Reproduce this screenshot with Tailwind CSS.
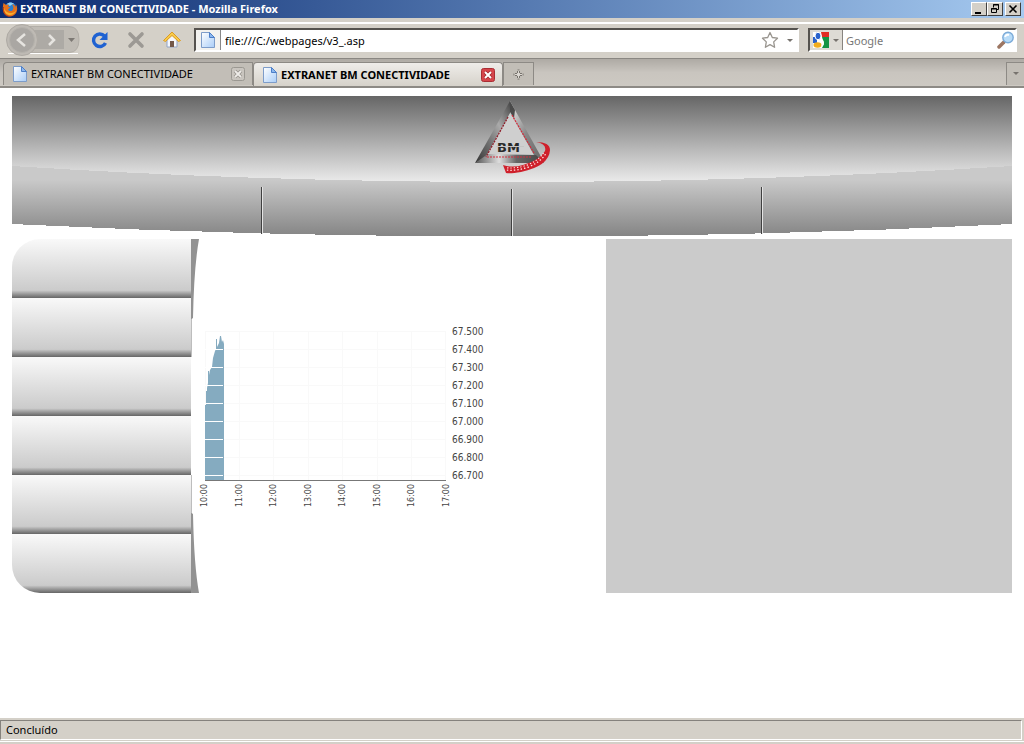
<!DOCTYPE html>
<html lang="pt-BR">
<head>
<meta charset="utf-8">
<title>EXTRANET BM CONECTIVIDADE</title>
<script src="https://cdn.jsdelivr.net/npm/@tailwindcss/browser@4"></script>
</head>
<body class="flex min-h-screen flex-col bg-white font-['Noto_Sans',sans-serif] text-[11px] leading-4 text-black">

<svg class="absolute size-0" aria-hidden="true">
  <defs>
    <linearGradient id="sheet" x1="0" y1="0" x2="1" y2="1"><stop offset="0" stop-color="#fff"/><stop offset="1" stop-color="#a9cdf8"/></linearGradient>
    <symbol id="page" viewBox="0 0 14 16"><path d="M.5.5h8l5 5v10H.5z" fill="url(#sheet)" stroke="#7d9cc9"/><path d="M8.500.5v5h5z" fill="#8db8ef" stroke="#4d7fc8"/></symbol>
  </defs>
</svg>

<!-- Title bar -->
<header class="flex h-[18px] shrink-0 items-center bg-linear-to-r from-[#0c2a70] to-[#a6caf0] pl-[2px] pr-[3px]">
  <svg class="mr-[2px] size-4 shrink-0" viewBox="0 0 16 16" aria-hidden="true">
    <circle cx="8.500" cy="7.500" r="6" fill="#2c7fd0"/><path d="M5 3c2-2 5-2 7 0-2 0-3 1-4 2z" fill="#8ed0f5"/>
    <path d="M1.500 2 4 4l3-.5-1 2 2 1-2 2c1 2 4 2 5 0 1-2 0-4-1-5 3 0 3 2 3.500 3l.5-3c3 5 0 12-6 12S-.5 10 1.500 2z" fill="#e5701b"/>
    <path d="M2 7c0 5 3 7.500 7 7 3-.5 5-3 5-5-1 2-3 3.500-6 3S3 10 2 7z" fill="#f8b02c"/><path d="M1.500 6c-1 5 2 9 6 9.500" fill="none" stroke="#b43a12"/>
  </svg>
  <h1 class="flex-1 whitespace-nowrap text-[11px] font-bold leading-4 text-white">EXTRANET BM CONECTIVIDADE - Mozilla Firefox</h1>
  <div class="flex">
    <button aria-label="Minimizar" class="h-[14px] w-4 border border-b-[#404040] border-l-white border-r-[#404040] border-t-white bg-[#d4d0c8]"><svg class="h-3 w-[14px]" viewBox="0 0 14 12"><path d="M3 9h6v2H3z"/></svg></button>
    <button aria-label="Restaurar" class="h-[14px] w-4 border border-b-[#404040] border-l-white border-r-[#404040] border-t-white bg-[#d4d0c8]"><svg class="h-3 w-[14px]" viewBox="0 0 14 12"><path d="M5.500 4.500v-3h5v5h-2M5 2h6M3.500 5.500h5v4h-5zM3 6h6" fill="none" stroke="#000"/></svg></button>
    <button aria-label="Fechar" class="ml-[2px] h-[14px] w-4 border border-b-[#404040] border-l-white border-r-[#404040] border-t-white bg-[#d4d0c8]"><svg class="h-3 w-[14px]" viewBox="0 0 14 12"><path d="m3.500 2.500 7 7m0-7-7 7" stroke="#000" stroke-width="1.600"/></svg></button>
  </div>
</header>

<!-- Navigation toolbar -->
<div class="flex h-[41px] shrink-0 items-center border-b border-t-4 border-b-[#8a8782] border-t-[#d4d0c8] bg-[#d4d0c8] pl-[2px] pr-[7px] shadow-[inset_0_2px_0_#fff]">
  <div class="relative flex h-[34px] w-[78px] items-center">
    <svg class="absolute inset-0 h-[34px] w-[78px]" viewBox="0 0 78 34" aria-hidden="true">
      <path d="M14 3.500h53q10 0 10 13t-10 13H14" fill="#c0bcb5" stroke="#b3afa8"/>
      <path d="M6 30.500h70" stroke="#fff"/>
      <path d="M30 7h32v19H30z" fill="#adaaa5"/>
      <circle cx="20" cy="17" r="15.500" fill="#bebab4" stroke="#aeaaa4"/><circle cx="20" cy="17" r="12.500" fill="#aaa7a3" stroke="#b6b3ad"/>
      <path d="m23 11-7 6 7 6" fill="none" stroke="#e6e4e0" stroke-width="2.500"/><path d="m47 12 5 5-5 5" fill="none" stroke="#e6e4e0" stroke-width="2.500"/>
      <path d="M66 15h7l-3.500 4z" fill="#7d7974"/>
    </svg>
    <button aria-label="Voltar" class="relative h-8 w-9"></button>
    <button aria-label="Avançar" class="relative h-8 w-7"></button>
    <button aria-label="Histórico" class="relative h-8 w-3"></button>
  </div>
  <button aria-label="Recarregar" class="ml-[11px] h-5 w-[18px]"><svg class="h-5 w-[18px]" viewBox="0 0 18 20"><path d="M13.500 6A6.300 6.300 0 1 0 14.500 13" fill="none" stroke="#1f62d2" stroke-width="3.400"/><path d="M16.500 2v8H8.500l2.500-2.500z" fill="#1f62d2"/></svg></button>
  <button aria-label="Parar" class="ml-[18px] h-5 w-[18px]"><svg class="h-5 w-[18px]" viewBox="0 0 18 20"><path d="m3 4 12 12M15 4 3 16" stroke="#9c9994" stroke-width="3.600" stroke-linecap="round"/></svg></button>
  <button aria-label="Página inicial" class="ml-[18px] h-5 w-[18px]"><svg class="h-5 w-[18px]" viewBox="0 0 18 20"><path d="M4 10v7h10v-7L9 5z" fill="#f5f7fc" stroke="#92a4c5"/><path d="M7 11h4v6H7z" fill="#735849"/><path d="M9 2 .5 10.500l2 1L9 5.500l6.500 6 2-1z" fill="#f8cb4b" stroke="#dc9b24"/></svg></button>
  <div class="ml-[13px] flex h-6 flex-1 items-center border-2 border-b-white border-l-[#55524e] border-r-white border-t-[#55524e] bg-white">
    <div class="flex h-full w-[25px] items-center justify-center border-r border-[#888] bg-[#f3f2ef]"><svg class="h-4 w-[14px]"><use href="#page"/></svg></div>
    <input aria-label="Endereço" value="file:///C:/webpages/v3_.asp" class="h-full min-w-0 flex-1 bg-transparent pl-1 outline-none">
    <button aria-label="Favoritar" class="size-[18px]"><svg class="size-[18px]" viewBox="0 0 18 18"><path d="m9 1.500 2.300 5 5.200.7-3.800 3.700.9 5.400L9 13.600l-4.600 2.700.9-5.400L1.500 7.200l5.200-.7z" fill="#fff" stroke="#99958f" stroke-width="1.300" stroke-linejoin="round"/></svg></button>
    <button aria-label="Mostrar endereços" class="ml-1 h-5 w-[14px]"><svg class="h-5 w-[14px]" viewBox="0 0 14 20"><path d="M4 9h6l-3 3z" fill="#77736e"/></svg></button>
  </div>
  <div class="ml-[9px] flex h-6 w-[209px] items-center border-2 border-b-white border-l-[#55524e] border-r-white border-t-[#55524e] bg-white">
    <button aria-label="Mecanismo de busca" class="flex h-full w-[33px] items-center border-r border-[#88847f] bg-[#dedbd5] pl-[3px]">
      <svg class="size-4" viewBox="0 0 16 16"><path d="M0 0h16v16H0z" fill="#fff"/><path d="M8 0h8v5H9z" fill="#e22b22"/><path d="M9 5h7v11H9l2-4z" fill="#149443"/><path d="M0 5h4v6H0z" fill="#2a62cc"/><ellipse cx="5" cy="4" rx="3" ry="3.700" fill="#2a62cc" stroke="#fff"/><ellipse cx="4.500" cy="13" rx="4" ry="2.800" fill="#f2ac1e"/><path d="M8 7c3 2 3 4 1 7" fill="none" stroke="#fff" stroke-width="1.500"/></svg>
      <svg class="ml-1 h-3 w-[6px]" viewBox="0 0 6 12"><path d="M0 5h6L3 8z" fill="#77736e"/></svg>
    </button>
    <input type="search" aria-label="Pesquisar" placeholder="Google" class="h-full min-w-0 flex-1 bg-transparent pl-[3px] outline-none placeholder:text-[#777]">
    <button aria-label="Buscar" class="size-[18px]"><svg class="size-[18px]" viewBox="0 0 18 18"><path d="m2 16 5-5" stroke="#9c7662" stroke-width="3.500" stroke-linecap="round"/><circle cx="11" cy="6.500" r="5.200" fill="#b9dcf8" stroke="#7cabd8" stroke-width="1.400"/><path d="M8 6q1-3 4-2" fill="none" stroke="#fff" stroke-width="2"/></svg></button>
  </div>
</div>

<!-- Tab strip -->
<nav aria-label="Abas" class="flex h-[29px] shrink-0 items-start border-b-2 border-b-[#8d8a85] bg-linear-to-b from-[#aeaaa4] via-[#c9c5bf] to-[#cdc9c2] pl-[3px] pt-[3px]">
  <div class="flex h-[23px] w-[250px] items-center rounded-tl-sm border border-b-0 border-[#8d8a85] bg-[#c2beb7] pl-[9px] pr-[7px]">
    <svg class="mr-1 h-4 w-[14px]"><use href="#page"/></svg>
    <a href="#" class="flex-1 whitespace-nowrap">EXTRANET BM CONECTIVIDADE</a>
    <button aria-label="Fechar aba" class="size-[14px]"><svg class="size-[14px]" viewBox="0 0 14 14"><rect x=".5" y=".5" width="13" height="13" rx="2" fill="#c9c5bf" stroke="#9b9892"/><path d="m4 4 6 6m0-6-6 6" stroke="#98948e" stroke-width="3.500"/><path d="m4 4 6 6m0-6-6 6" stroke="#eeece8" stroke-width="1.800"/></svg></button>
  </div>
  <div class="flex h-6 w-[250px] items-center rounded-t-sm border border-b-0 border-[#8d8a85] bg-linear-to-b from-[#efedea] to-[#d6d2ca] pl-[9px] pr-[7px]">
    <svg class="mr-1 h-4 w-[14px]"><use href="#page"/></svg>
    <a href="#" aria-current="page" class="flex-1 whitespace-nowrap font-bold">EXTRANET BM CONECTIVIDADE</a>
    <button aria-label="Fechar aba atual" class="size-[14px]"><svg class="size-[14px]" viewBox="0 0 14 14"><rect x=".5" y=".5" width="13" height="13" rx="2" fill="#d6454b" stroke="#a92e34"/><path d="m4 4 6 6m0-6-6 6" stroke="#9d262c" stroke-width="3.500"/><path d="m4 4 6 6m0-6-6 6" stroke="#fff" stroke-width="2"/></svg></button>
  </div>
  <button aria-label="Nova aba" class="flex h-[23px] w-[31px] items-center justify-center border border-b-0 border-[#8d8a85] bg-[#c2beb7]"><svg class="size-[11px]" viewBox="0 0 11 11"><path d="M4.500 1h2v3.500H10v2H6.500V10h-2V6.500H1v-2h3.500z" fill="#ddd9d3" stroke="#77736d" stroke-dasharray="2 1"/></svg></button>
  <button aria-label="Listar abas" class="ml-auto flex h-[23px] w-[18px] items-center justify-center border border-b-0 border-r-0 border-[#8d8a85] bg-[#c2beb7]"><svg class="h-1 w-[6px]" viewBox="0 0 6 4"><path d="M0 0h6L3 3z" fill="#77736e"/></svg></button>
</nav>

<!-- Page -->
<main class="flex-1 px-3 pt-2">
  <div class="relative h-[140px]">
    <svg class="h-full w-full" viewBox="0 0 1000 140" preserveAspectRatio="none" shape-rendering="crispEdges" aria-hidden="true">
      <defs>
        <linearGradient id="top" gradientUnits="userSpaceOnUse" x1="0" y1="0" x2="0" y2="86"><stop offset="0" stop-color="#666"/><stop offset="1" stop-color="#ebebeb"/></linearGradient>
        <linearGradient id="bar" gradientUnits="userSpaceOnUse" x1="0" y1="84" x2="0" y2="140"><stop offset="0" stop-color="#c9c9c9"/><stop offset="1" stop-color="#858585"/></linearGradient>
      </defs>
      <path d="M0 60H1000V128Q500 153 0 128z" fill="url(#bar)"/>
      <path d="M0 0H1000V70Q500 102 0 70z" fill="url(#top)"/>
      <path d="M249.500 91v47M499.500 93v47M749.500 91v47" stroke="#404040"/>
      <path d="M250.500 91v47M500.500 93v47M750.500 91v47" stroke="#e4e4e4"/>
    </svg>
    <svg class="absolute left-1/2 top-1 -ml-[38px] h-[76px] w-20" viewBox="0 0 80 76" role="img" aria-label="BM Conectividade">
      <defs>
        <linearGradient id="left" x1="1" y1="0" x2="0" y2="1"><stop offset="0" stop-color="#444"/><stop offset=".35" stop-color="#aaa"/><stop offset=".6" stop-color="#777"/><stop offset="1" stop-color="#333"/></linearGradient>
        <linearGradient id="right" x1="0" y1="0" x2="1" y2="1"><stop offset="0" stop-color="#eee"/><stop offset=".5" stop-color="#888"/><stop offset="1" stop-color="#666"/></linearGradient>
        <linearGradient id="base" x1="0" y1="0" x2="1" y2="0"><stop offset="0" stop-color="#555"/><stop offset=".35" stop-color="#ddd"/><stop offset=".6" stop-color="#666"/><stop offset="1" stop-color="#444"/></linearGradient>
      </defs>
      <path d="M36 12 60 55H12z" fill="#cfcfcf"/>
      <path d="M36 1 1 63l10-5 25-45z" fill="url(#left)"/>
      <path d="m36 1 34 61-10-7-24-43z" fill="url(#right)"/>
      <path d="M36 1v11l4 6 1-8z" fill="#4a4a4a"/>
      <path d="m14 54-13 9h69l-8-8z" fill="url(#base)"/>
      <path d="M34 17 12 57" fill="none" stroke="#8e1f2b" stroke-width="1.300" stroke-dasharray="2 1"/>
      <path d="m38 15 22 38M13 57h44" fill="none" stroke="#d42c3c" stroke-width="1.200" stroke-dasharray="2 1"/>
      <text x="23" y="52" font-family="DejaVu Sans" font-size="13" font-weight="bold" fill="#292929">BM</text>
      <path d="M22 46.500h28" stroke="#c4c4c4"/>
      <path d="M62 42q14 0 14 8-1 16-29 22-11 2-15 1l-3-8q9 3 20 0 17-5 22-14 2-7-9-9z" fill="#cf202b"/>
      <path d="M33 69q10 1 21-3 12-5 17-13" fill="none" stroke="#ffe3e3" stroke-width="3.500" stroke-dasharray="1.400 2"/>
      <path d="M33 69q10 1 21-3 12-5 17-13" fill="none" stroke="#cf202b" stroke-width="1.200"/>
    </svg>
  </div>

  <div class="mt-[3px] flex">
    <nav aria-label="Menu" class="w-[179px] overflow-hidden rounded-l-[28px]">
      <a href="#" aria-label="Item 1" class="block h-[59px] bg-linear-to-b from-[#f9f9f9] from-0% via-[#cbcbcb] via-87% to-[#666] to-100%"></a>
      <a href="#" aria-label="Item 2" class="block h-[59px] bg-linear-to-b from-[#f9f9f9] from-0% via-[#cbcbcb] via-87% to-[#666] to-100%"></a>
      <a href="#" aria-label="Item 3" class="block h-[59px] bg-linear-to-b from-[#f9f9f9] from-0% via-[#cbcbcb] via-87% to-[#666] to-100%"></a>
      <a href="#" aria-label="Item 4" class="block h-[59px] bg-linear-to-b from-[#f9f9f9] from-0% via-[#cbcbcb] via-87% to-[#666] to-100%"></a>
      <a href="#" aria-label="Item 5" class="block h-[59px] bg-linear-to-b from-[#f9f9f9] from-0% via-[#cbcbcb] via-87% to-[#666] to-100%"></a>
      <a href="#" aria-label="Item 6" class="block h-[59px] bg-linear-to-b from-[#f9f9f9] from-0% via-[#cbcbcb] via-87% to-[#666] to-100%"></a>
    </nav>
    <svg class="h-[354px] w-2" viewBox="0 0 8 354" aria-hidden="true"><path d="M0 0h8Q3 28 2 79L.6 80V118H0zM0 354h8Q3 326 2 275L.6 274V236H0z" fill="#929292"/></svg>
    <div class="flex-1 pt-[86px]">
      <svg class="h-[190px] w-[300px]" viewBox="0 0 300 190" role="img" aria-label="Gráfico intradiário">
        <path d="M6 6.500h241M6 24.500h241M6 42.500h241M6 60.500h241M6 78.500h241M6 96.500h241M6 114.500h241M6 132.500h241M6 150.500h241M6.500 6v149M40.500 6v149M74.500 6v149M109.500 6v149M143.500 6v149M178.500 6v149M212.500 6v149M246.500 6v149" stroke="#f9f9f9"/>
        <path d="M6 155V80h1V66h1v-3l1-5V46h1v4l1-5 2-3 1-9 2-7 1-2V14h1v8l2-4 1-7 1 0 1 6 1-2 1 4v136z" fill="#85abc0"/>
        <path d="M6 24.500h18M6 42.500h18M6 60.500h18M6 78.500h18M6 96.500h18M6 114.500h18M6 132.500h18M6 150.500h18" stroke="#fff"/>
        <path d="M6 155.500h241" stroke="#777"/>
        <g fill="#444" font-family="DejaVu Sans Condensed, DejaVu Sans" font-size="10">
          <text x="253" y="10">67.500</text><text x="253" y="28">67.400</text><text x="253" y="46">67.300</text><text x="253" y="64">67.200</text><text x="253" y="82">67.100</text><text x="253" y="100">67.000</text><text x="253" y="118">66.900</text><text x="253" y="136">66.800</text><text x="253" y="154">66.700</text>
        </g>
        <g fill="#444" font-family="DejaVu Sans" font-size="8">
          <text transform="translate(8 182) rotate(-90)">10:00</text><text transform="translate(43 182) rotate(-90)">11:00</text><text transform="translate(77 182) rotate(-90)">12:00</text><text transform="translate(112 182) rotate(-90)">13:00</text><text transform="translate(146 182) rotate(-90)">14:00</text><text transform="translate(181 182) rotate(-90)">15:00</text><text transform="translate(215 182) rotate(-90)">16:00</text><text transform="translate(250 182) rotate(-90)">17:00</text>
        </g>
      </svg>
    </div>
    <aside aria-label="Painel" class="w-[406px] bg-[#cbcbcb]"></aside>
  </div>
</main>

<!-- Status bar -->
<footer class="h-[26px] shrink-0 border-t-2 border-[#d4d0c8] bg-[#d4d0c8]">
  <div role="status" class="mr-[2px] h-5 border border-b-white border-l-[#85827d] border-r-white border-t-[#85827d] pl-[5px] leading-[18px]">Concluído</div>
  <div class="mt-[1px] h-px bg-white"></div>
</footer>
</body>
</html>
